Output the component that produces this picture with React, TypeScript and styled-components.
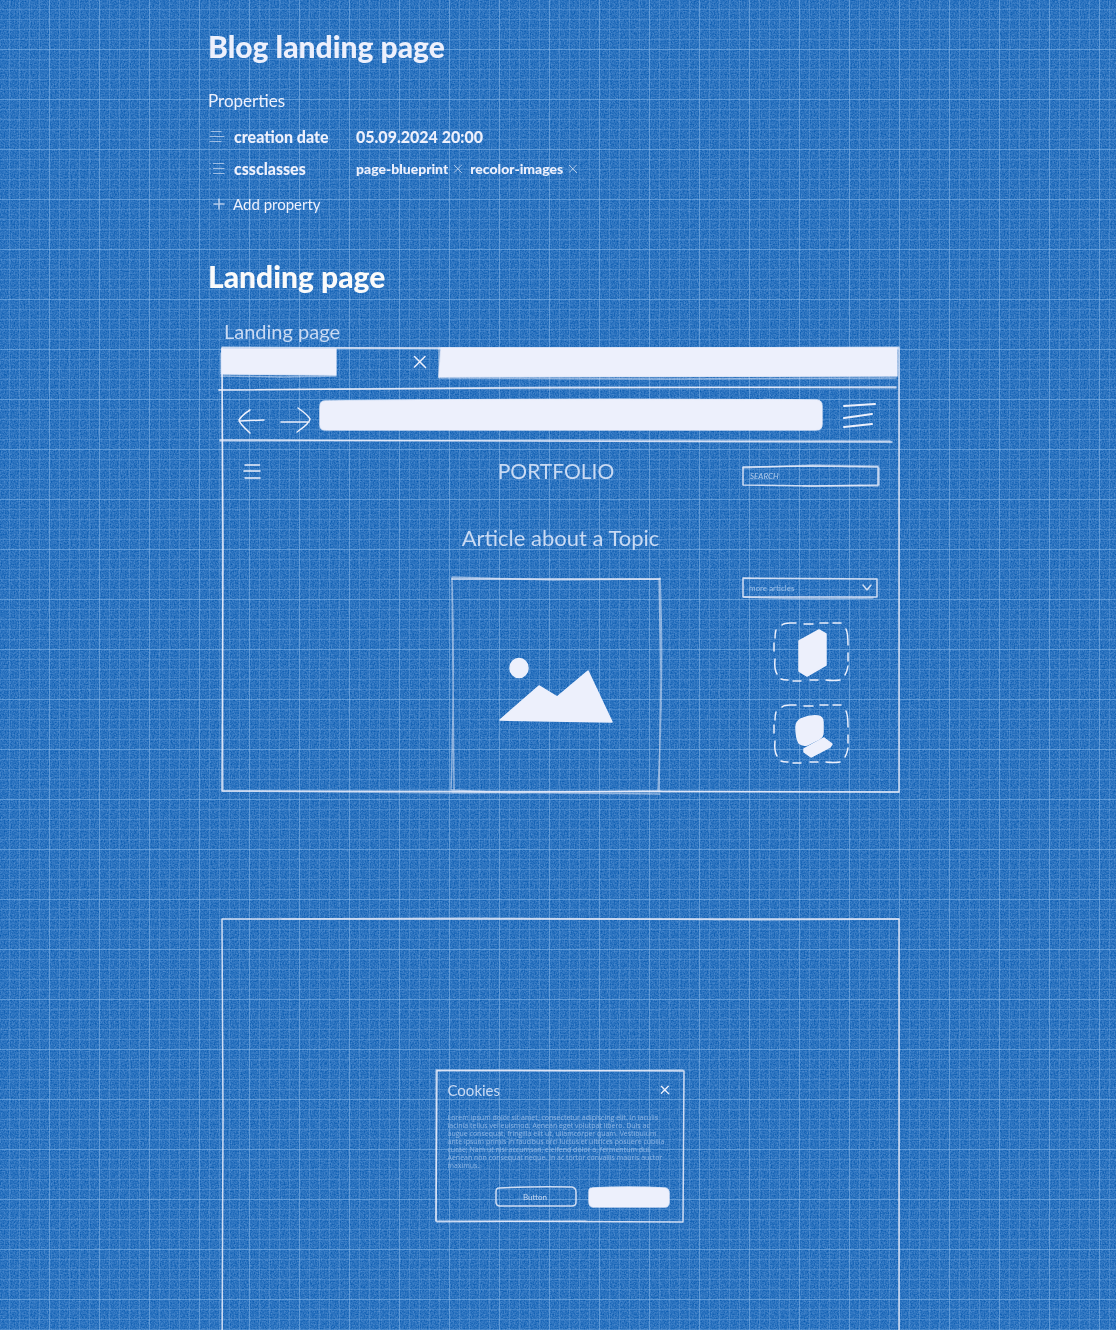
import React from "react";
import styled, { createGlobalStyle } from "styled-components";

const ink = "#edf0fc";
const soft = "#c9daf3";
const hand = `Lato, "Open Sans", sans-serif`;

const GlobalStyle = createGlobalStyle`
  * { box-sizing: border-box; }
  body { margin: 0; background: #2a72c0; color: ${ink}; font-family: ${hand}; }
  h1, h2, h3, p, dl, dd, dt { margin: 0; }
  button, input, select { font-family: inherit; color: inherit; }
`;

const Paper = styled.svg`
  position: fixed;
  inset: 0;
  width: 100%;
  height: 100%;
`;

const Scroller = styled.div`
  position: relative;
  height: 100vh;
  overflow-y: auto;
  scrollbar-width: none;
  background-image:
    linear-gradient(to right, transparent 49px, rgba(150, 195, 240, 0.32) 49px),
    linear-gradient(to bottom, transparent 49px, rgba(150, 195, 240, 0.32) 49px),
    linear-gradient(to right, transparent 9px, rgba(150, 195, 240, 0.24) 9px),
    linear-gradient(to bottom, transparent 9px, rgba(150, 195, 240, 0.24) 9px);
  background-size: 50px 50px, 50px 50px, 10px 10px, 10px 10px;
`;

const Note = styled.main`
  max-width: 700px;
  margin: 0 auto;
  padding: 26px 0 40px;
`;

const Title = styled.h1`
  font-size: 30px;
  line-height: 40px;
  font-weight: 900;
`;

const SectionTitle = styled.h2`
  margin-top: 36px;
  font-size: 30px;
  line-height: 40px;
  font-weight: 900;
  color: #fafafa;
`;

const PropertiesTitle = styled.h3`
  margin: 23px 0 7px;
  font-size: 17px;
  line-height: 24px;
  font-weight: 400;
`;

const PropertyRow = styled.div`
  display: grid;
  grid-template-columns: 26px 122px 1fr;
  align-items: center;
  height: 32px;
  font-size: 16px;
  font-weight: 900;
`;

const Tags = styled.dd`
  display: flex;
  align-items: center;
  gap: 8px;
  font-size: 14px;
`;

const IconButton = styled.button`
  display: flex;
  padding: 0;
  border: 0;
  background: none;
`;

const Tag = styled.span`
  display: flex;
  align-items: center;
  gap: 6px;
  ${IconButton} { padding-top: 2px; }
`;

const AddButton = styled(IconButton)`
  align-items: center;
  gap: 8px;
  height: 32px;
  margin-top: 4px;
  padding-left: 5px;
  font-size: 15px;
`;

const Drawing = styled.section`
  padding: 0 9px 0 14px;
`;

const DrawingLabel = styled.p`
  margin: 23px 0 5px 2px;
  font-size: 20px;
  line-height: 24px;
  color: ${soft};
`;

const Stroke = styled.svg`
  display: block;
  flex: none;
  overflow: visible;
  fill: none;
  stroke: ${ink};
  stroke-width: 1.5;
  stroke-linecap: round;
  stroke-linejoin: round;
`;

const Overlay = styled(Stroke)`
  position: absolute;
  inset: 0;
  width: 100%;
  height: 100%;
  pointer-events: none;
  path {
    vector-effect: non-scaling-stroke;
    stroke-opacity: 0.85;
  }
`;

const Frame = styled.div`
  position: relative;
`;

const TabStrip = styled(Frame)`
  display: flex;
  align-items: flex-start;
  height: 40px;
  padding-right: 2px;
`;

const Tab = styled.div`
  display: flex;
  align-items: center;
  justify-content: space-between;
  width: 217px;
  padding-right: 13px;
`;

const Block = styled(Frame)<{ $height: number; $width?: number }>`
  flex: ${(p) => (p.$width ? "none" : "1")};
  width: ${(p) => (p.$width ? `${p.$width}px` : "auto")};
  height: ${(p) => p.$height}px;
  svg { fill: ${ink}; }
`;

const Toolbar = styled(Frame)`
  display: flex;
  align-items: center;
  height: 53px;
  padding: 0 23px 0 16px;
`;

const Arrows = styled.div`
  display: flex;
  gap: 15px;
  padding: 12px 10px 0 0;
`;

const MenuButton = styled(IconButton)`
  margin-left: 21px;
`;

const Columns = styled.div`
  display: grid;
  grid-template-columns: 1fr 208px 1fr;
  padding-right: 9px;
`;

const SiteHeader = styled(Columns)`
  align-items: start;
  height: 25px;
  margin-top: 20px;
`;

const SiteMenu = styled(IconButton)`
  padding-left: 22px;
`;

const SiteName = styled.h3`
  font-size: 21px;
  line-height: 20px;
  font-weight: 400;
  text-align: center;
  color: ${soft};
`;

const Side = styled.div`
  width: 136px;
  margin: 0 11px 0 auto;
`;

const SearchSide = styled(Side)`
  align-self: end;
`;

const Field = styled(Frame)`
  display: flex;
  height: 20px;
`;

const SearchInput = styled.input`
  width: 100%;
  padding: 0 7px;
  border: 0;
  background: none;
  font-size: 8px;
  font-style: italic;
  &::placeholder { color: ${soft}; opacity: 0.85; }
`;

const Select = styled.select`
  width: 100%;
  padding: 0 6px;
  border: 0;
  appearance: none;
  background: none;
  font-size: 8px;
  color: #9fc1e9;
`;

const ArticleTitle = styled.h3`
  margin: 40px 0 28px;
  padding-left: 0;
  font-size: 22px;
  line-height: 24px;
  font-weight: 400;
  text-align: center;
  color: ${soft};
`;

const Hero = styled(Frame)`
  grid-column: 2;
  display: flex;
  justify-content: center;
  height: 214px;
  padding: 78px 2px 0 0;
`;

const Thumbs = styled.div`
  display: flex;
  flex-direction: column;
  align-items: center;
  gap: 24px;
  margin-top: 25px;
`;

const PageFrame = styled(Frame)`
  display: flex;
  align-items: center;
  justify-content: center;
  height: 454px;
  margin-top: 127px;
  padding-right: 2px;
`;

const Dialog = styled.div`
  position: relative;
  width: 248px;
  height: 152px;
  padding: 10px 15px 15px 12px;
`;

const DialogHead = styled.div`
  display: flex;
  align-items: center;
  justify-content: space-between;
  height: 20px;
  margin-bottom: 14px;
`;

const DialogTitle = styled.h3`
  font-size: 15px;
  font-weight: 400;
  color: ${soft};
`;

const Legal = styled.p`
  font-family: "Open Sans", sans-serif;
  font-size: 7px;
  line-height: 8px;
  white-space: pre;
  color: #8fb6e4;
`;

const Actions = styled.div`
  display: flex;
  justify-content: flex-end;
  gap: 12px;
  margin-top: 17px;
`;

const Action = styled.button<{ $filled?: boolean }>`
  position: relative;
  width: 81px;
  height: 20px;
  padding: 0;
  border: 0;
  background: none;
  font-size: 8px;
  color: ${soft};
  svg { fill: ${(p) => (p.$filled ? ink : "none")}; }
`;

const Sketch = ({ w, h, lines, faint }: { w: number; h: number; lines: string; faint?: string }) => (
  <Overlay viewBox={`0 0 ${w} ${h}`} preserveAspectRatio="none" aria-hidden="true">
    <path d={lines} />
    {faint && <path d={faint} fill="none" opacity="0.6" />}
  </Overlay>
);

const Cross = ({ size, width = 1 }: { size: number; width?: number }) => (
  <Stroke width={size} height={size} viewBox="0 0 12 12" style={{ strokeWidth: width }}>
    <path d="M0.5 0.5L11.5 11.5M11 0.5L0.5 11" />
  </Stroke>
);

const legal = `Lorem ipsum dolor sit amet, consectetur adipiscing elit. In iaculis
lacinia tellus vel euismod. Aenean eget volutpat libero. Duis ac
augue consequat, fringilla elit ut, ullamcorper quam. Vestibulum
ante ipsum primis in faucibus orci luctus et ultrices posuere cubilia
curae; Nam ut nisi accumsan, eleifend dolor a, fermentum dui.
Aenean non consequat neque. In ac tortor convallis mauris auctor
maximus.`;

const Thumb = ({ children }: { children: React.ReactNode }) => (
  <Stroke width="74" height="58" viewBox="0 0 74 58">
    <path d="M8 2Q10 0 16 0H22M30 1H39M46 0H54M59 0H67M72 6Q74 10 74 22M74 30V38M74 43Q73 49 71 52M66 57Q60 58 52 57M44 57H36M27 58H19M14 57Q9 57 7 56M3 51Q0 46 1 36M0 28V20M1 15Q1 10 2 7" />
    <g fill={ink}>{children}</g>
  </Stroke>
);

export default function App() {
  return (
    <>
      <GlobalStyle />
      <Paper aria-hidden="true">
        <filter id="grain" x="0" y="0" width="100%" height="100%" colorInterpolationFilters="sRGB">
          <feTurbulence type="fractalNoise" baseFrequency="0.7" numOctaves="3" seed="4" />
          <feColorMatrix values="0 0 0 .36 -.01  0 0 0 .25 .325  0 0 0 .16 .67  0 0 0 0 1" />
        </filter>
        <rect width="100%" height="100%" filter="url(#grain)" />
      </Paper>
      <Scroller>
        <Note>
          <Title>Blog landing page</Title>
          <PropertiesTitle>Properties</PropertiesTitle>
          <dl>
            <PropertyRow>
              <Stroke width="16" height="12" viewBox="0 0 16 12" opacity="0.6" style={{ strokeWidth: 1 }}>
                <path d="M3 1.5H13M2 6.5H16M2 11.5H13" />
              </Stroke>
              <dt>creation date</dt>
              <dd>05.09.2024 20:00</dd>
            </PropertyRow>
            <PropertyRow>
              <Stroke width="16" height="12" viewBox="0 0 16 12" opacity="0.6" style={{ strokeWidth: 1 }}>
                <path d="M5.5 1.5H16M5.5 6.5H16M5.5 11.5H16M2 1.5H2.2M2 6.5H2.2M2 11.5H2.2" />
              </Stroke>
              <dt>cssclasses</dt>
              <Tags>
                {["page-blueprint", "recolor-images"].map((name) => (
                  <Tag key={name}>
                    {name}
                    <IconButton aria-label={`Remove ${name}`}><Cross size={8} /></IconButton>
                  </Tag>
                ))}
              </Tags>
            </PropertyRow>
          </dl>
          <AddButton>
            <Stroke width="12" height="12" viewBox="0 0 12 12" opacity="0.7"><path d="M6 1V11M1 6H11" /></Stroke>
            Add property
          </AddButton>
          <SectionTitle>Landing page</SectionTitle>
          <Drawing>
            <DrawingLabel>Landing page</DrawingLabel>
            <Frame>
              <Sketch w={677} h={444}
                lines="M0 0L677 0L677 444L0 443L1 200L0 0"
                faint="M0 -1L300 1L677 -1M1 443L240 445L420 443L677 444M0 0L1 443" />
              <TabStrip>
                <Tab>
                  <Block $width={114} $height={28}>
                    <Sketch w={114} h={28} lines="M0 1L114 1L114 27L0 26Z" faint="M-1 28L60 29L114 28M-1 5V26" />
                  </Block>
                  <IconButton aria-label="Close tab"><Cross size={12} width={1.5} /></IconButton>
                </Tab>
                <Block $height={30}>
                  <Sketch w={458} h={30} lines="M2 0L458 0L458 28L0 29Z" faint="M0 0V29M0 30L230 31L457 30" />
                </Block>
                <Sketch w={677} h={40} lines="M-3 42L300 40L674 39" faint="M-3 42L350 39L674 40" />
              </TabStrip>
              <Toolbar>
                <Arrows>
                  <IconButton aria-label="Back">
                    <Stroke width="27" height="26" viewBox="0 0 27 26"><path d="M1 13L26 12M12 2Q4 7 1 12Q1 15 12 25" /></Stroke>
                  </IconButton>
                  <IconButton aria-label="Forward">
                    <Stroke width="30" height="26" viewBox="0 0 30 26"><path d="M1 14H29M18 0Q28 7 30 11Q30 15 17 24" /></Stroke>
                  </IconButton>
                </Arrows>
                <Block $height={30}>
                  <Sketch w={502} h={30} lines="M5 1Q250 -2 497 0Q502 1 502 6V24Q502 30 496 30H6Q0 30 0 25V7Q0 1 5 1Z" />
                </Block>
                <MenuButton aria-label="Browser menu">
                  <Stroke width="33" height="24" viewBox="0 0 33 24" style={{ strokeWidth: 2 }}><path d="M1 3L32 1M1 15L29 11M1 24L29 21" /></Stroke>
                </MenuButton>
                <Sketch w={677} h={53} lines="M-2 52L300 53L670 54" faint="M-2 53L350 52L668 53" />
              </Toolbar>
              <SiteHeader>
                <SiteMenu aria-label="Site menu">
                  <Stroke width="16" height="22" viewBox="0 0 16 22"><path d="M1 4H15.500M0 10H16M1 17H16" /></Stroke>
                </SiteMenu>
                <SiteName>PORTFOLIO</SiteName>
                <SearchSide>
                  <Field>
                    <SearchInput aria-label="Search" placeholder="SEARCH" />
                    <Sketch w={136} h={20} lines="M0 1L68 0L135 1V19L70 20L0 19Z" faint="M0 2L70 -1L135 0M136 2V19M60 20H135" />
                  </Field>
                </SearchSide>
              </SiteHeader>
              <ArticleTitle>Article about a Topic</ArticleTitle>
              <Columns>
                <Hero>
                  <Sketch w={208} h={214}
                    lines="M0 1L208 1"
                    faint="M0 -1L100 2L208 1M208 0Q212 90 206 213M0 0Q3 100 -1 212M207 1L209 100L207 213M0 1L1 100L2 212M0 212L60 215L208 213M0 214L208 216" />
                  <Stroke width="116" height="68" viewBox="0 0 116 68" style={{ fill: ink }}>
                    <ellipse cx="22" cy="12" rx="9" ry="9.500" />
                    <path d="M3 64L42 30L60 41L91 15L115 66Z" />
                  </Stroke>
                </Hero>
                <Side>
                  <Field>
                    <Select aria-label="More articles"><option>more articles</option></Select>
                    <Sketch w={136} h={20} lines="M0 0L134 1V19L0 19ZM120 7L124 12L128 7" faint="M1 19Q60 22 130 20" />
                  </Field>
                  <Thumbs>
                    <Thumb><path d="M25 18L45 7L52 11V42L33 53L25 48Z" /></Thumb>
                    <Thumb>
                      <path d="M22 22Q22 17 27 14Q36 10 44 11Q49 12 49 17V27Q49 32 45 34L33 40Q28 41 25 38Q22 33 22 22Z" />
                      <path d="M30 44L50 33L58 39L56 42L37 52L30 47Z" />
                    </Thumb>
                  </Thumbs>
                </Side>
              </Columns>
            </Frame>
            <PageFrame>
              <Sketch w={677} h={454} lines="M0 0L677 0L677 454L0 454L1 200L0 0" faint="M60 0L250 -1L540 1L677 0" />
              <Dialog role="dialog" aria-label="Cookies">
                <Sketch w={248} h={152} lines="M1 0L248 1L247 152L0 151L1 0" faint="M0 1L125 1L247 0M0 0V151M1 152L150 151" />
                <DialogHead>
                  <DialogTitle>Cookies</DialogTitle>
                  <IconButton aria-label="Close"><Cross size={8} width={2} /></IconButton>
                </DialogHead>
                <Legal>{legal}</Legal>
                <Actions>
                  <Action>
                    <Sketch w={81} h={20} lines="M4 1Q40 -1 77 0Q81 1 81 5V15Q81 19 77 19H5Q1 19 1 15V5Q1 1 4 1Z" />
                    Button
                  </Action>
                  <Action $filled aria-label="Accept">
                    <Sketch w={81} h={20} lines="M4 1Q40 -1 77 1Q81 2 81 6V16Q80 20 77 20H5Q1 19 1 15V5Q1 1 4 1Z" />
                  </Action>
                </Actions>
              </Dialog>
            </PageFrame>
          </Drawing>
        </Note>
      </Scroller>
    </>
  );
}
